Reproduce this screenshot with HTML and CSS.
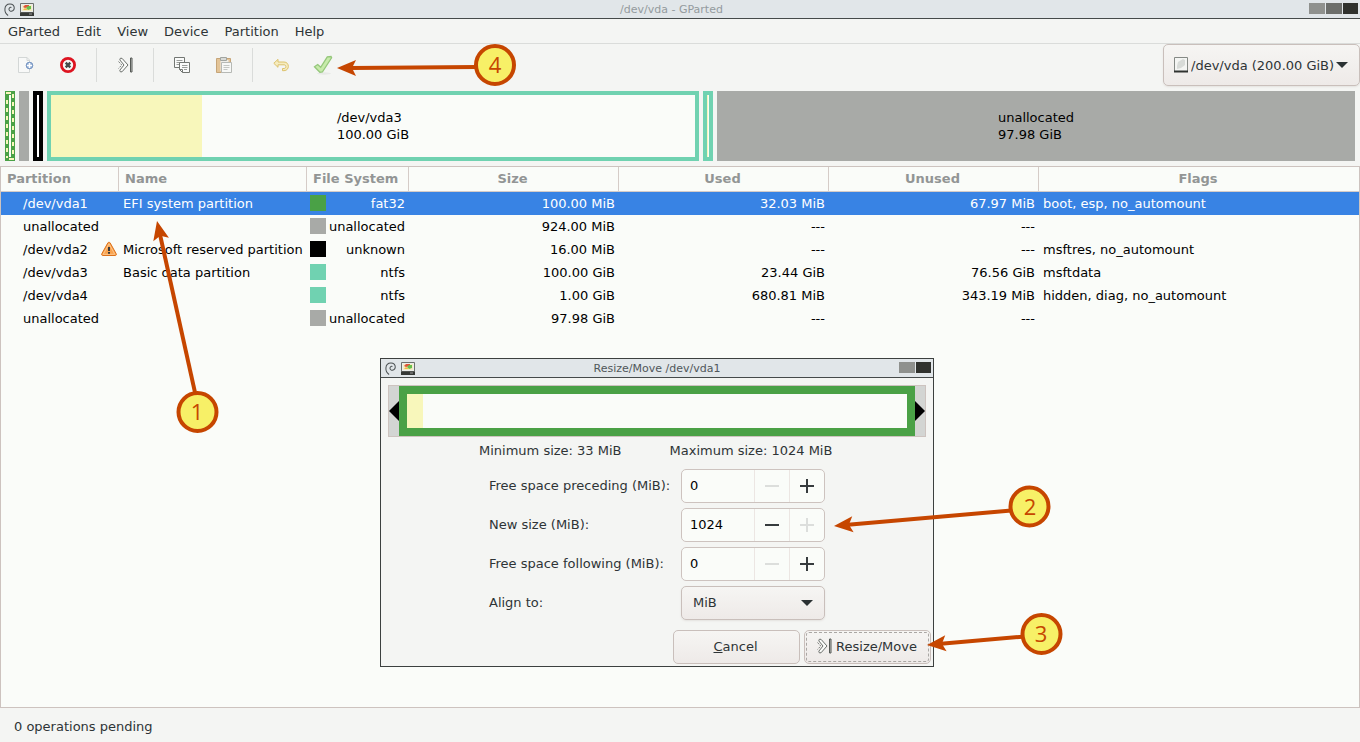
FILE: index.html
```html
<!DOCTYPE html>
<html lang="en">
<head>
<meta charset="utf-8">
<title>/dev/vda - GParted</title>
<link rel="stylesheet" href="styles.css">
</head>
<body>
<svg class="defs" aria-hidden="true">
  <symbol id="swirl" viewBox="0 0 12 14">
    <path d="M4.500 13.500C2 12 .8 9.500 1 6.500C1.200 3 3.500 1 6.500 1C9.500 1 11.300 3 11.200 5.500C11 8 9 9.200 7.200 8.800C5.400 8.400 5 6.500 5.900 5.300C6.500 4.500 7.400 4.300 8.200 4.700" fill="none" stroke="#4a5052" stroke-width="1.100"/>
  </symbol>
  <symbol id="app" viewBox="0 0 14 13">
    <path d="M.5.5h13v9H.5z" fill="#eceeeb" stroke="#6d716d"/>
    <path d="M0 9.500h14V13H0z" fill="#363936"/>
    <path d="M2 2h10v6H2z" fill="#f5ecc4"/>
    <path d="M3 4l2-2h4v2L5 5z" fill="#e0563b"/>
    <path d="M8 3h3v3L8 7 6 5z" fill="#68c04c"/>
    <path d="M3 7l2-2 3 2z" fill="#f2b845"/>
    <path d="M9 11h3" stroke="#999"/>
  </symbol>
  <symbol id="resize" viewBox="0 0 16 16">
    <path d="M3.300 1.300h1.700L11 8l-6 6.800H3.300l-.5-1.600L7 8 2.800 2.900z" fill="#fafbf9" stroke="#6b6f6b"/>
    <path d="M1.500 4.500L4.800 8l-3.300 3.500" fill="none" stroke="#7c807c" stroke-dasharray="2 1"/>
    <path d="M13.500 1h1.500v14h-1.500z" fill="#c9ccc9" stroke="#555955"/>
  </symbol>
  <symbol id="caret" viewBox="0 0 12 6"><path d="M0 0h12L6 6z" fill="#2b3133"/></symbol>
</svg>

<header class="titlebar">
  <div class="titlebar-icons"><svg class="swirl"><use href="#swirl"/></svg><svg class="app"><use href="#app"/></svg></div>
  <h1 class="title inactive">/dev/vda - GParted</h1>
  <div class="controls"><button class="ctl light" aria-label="Minimize"></button><button class="ctl mid" aria-label="Maximize"></button><button class="ctl dark" aria-label="Close"></button></div>
</header>

<nav class="menubar">
  <button>GParted</button><button>Edit</button><button>View</button><button>Device</button><button>Partition</button><button>Help</button>
</nav>

<div class="toolbar">
  <button class="tool" aria-label="New partition"><svg width="16" height="16" viewBox="0 0 16 16"><path d="M.5.5h8.500l2.500 2.500v12.500H.5z" fill="#f8f9f8" stroke="#d3d7d6"/><path d="M9 .5v3h3" fill="none" stroke="#d3d7d6"/><circle cx="11.500" cy="8.500" r="3.300" fill="#8fadd5" stroke="#7896c2"/><path d="M11.500 6v5M9 8.500h5" stroke="#fff" stroke-width="1.600"/></svg></button>
  <button class="tool" aria-label="Delete partition"><svg width="16" height="16" viewBox="0 0 16 16"><circle cx="8" cy="8" r="6.600" fill="#f7f7f5" stroke="#dd1420" stroke-width="2.800"/><path d="M5.700 5.700l4.600 4.600M10.300 5.700l-4.600 4.600" stroke="#444b4a" stroke-width="2.400"/></svg></button>
  <span class="sep"></span>
  <button class="tool" aria-label="Resize/Move"><svg width="16" height="16"><use href="#resize"/></svg></button>
  <span class="sep"></span>
  <button class="tool" aria-label="Copy"><svg width="16" height="16" viewBox="0 0 16 16"><path d="M.5.5h10v10H.5z" fill="#fafbfa" stroke="#737773"/><path d="M2.500 3.500h6M2.500 5.500h5M2.500 7.500h3" stroke="#9a9d9a"/><path d="M5.500 5.500h10v10h-7l-3-3z" fill="#fafbfa" stroke="#737773"/><path d="M8 8.500h5.500M8 10.500h5.500M10 12.500h3" stroke="#9a9d9a"/><path d="M5.500 12.500h3v3" fill="none" stroke="#737773"/></svg></button>
  <button class="tool" aria-label="Paste"><svg width="16" height="16" viewBox="0 0 16 16"><path d="M.5 1.500h14v14H.5z" fill="#e3c497" stroke="#c6a578"/><path d="M4.500 3h8v11h-8z" fill="#eeeeea"/><path d="M4.500.5h6v3h-6z" fill="#d8dad7" stroke="#a1a5a0"/><path d="M5.500 5.500h10v10h-10z" fill="#f7f8f6" stroke="#b6b9b5"/><path d="M7.500 8.500h6M7.500 10.500h6M7.500 12.500h4" stroke="#c4c7c3"/></svg></button>
  <span class="sep"></span>
  <button class="tool" aria-label="Undo"><svg width="16" height="16" viewBox="0 0 16 16"><path d="M5 2.300L.8 6.300 5 10.300V7.800h6c2.500 0 2.500 3.700 0 3.700H9.500v2.200H11c5.800 0 5.800-8.700 0-8.700H5z" fill="#f6ecbf" stroke="#dcc26c"/></svg></button>
  <button class="tool" aria-label="Apply"><svg width="20" height="20" viewBox="0 0 20 20"><ellipse cx="11" cy="18.500" rx="7" ry="1.200" fill="#e7e9e6"/><path d="M1.500 11.800l3.200-2.300 3 2.800L14.300 1.800l3.700-.3 .6 1.300-9.200 14.200-2.500.3z" fill="#c7ebaa" stroke="#95c77b" stroke-width="1.300"/></svg></button>
  <div class="device">
    <svg class="disk" width="14" height="16" viewBox="0 0 14 16"><path d="M.5.5h13v14H.5z" fill="#f4f5f3" stroke="#858985"/><path d="M3 9l1-4 5-3 2 1v5l-4 3-4 1z" fill="#d8dbd8"/><path d="M0 14.500h14" stroke="#303330" stroke-width="2"/></svg>
    <select class="select device-select" aria-label="Device"><option>/dev/vda (200.00 GiB)</option></select>
    <svg class="caret"><use href="#caret"/></svg>
  </div>
</div>

<section class="diskmap" aria-label="Disk layout">
  <div class="part efi"><svg class="fill" viewBox="0 0 10 70" preserveAspectRatio="none"><path d="M0 0h10v70H0z" fill="#4aa146"/><path d="M4 4h2v62H4z" fill="#fafcf9"/><path d="M1 2h5M4 68h5" stroke="#f8f7bb" stroke-width="2"/><path d="M2 9v58" stroke="#f8f7bb" stroke-width="2" stroke-dasharray="4 4"/><path d="M8 3v61" stroke="#f8f7bb" stroke-width="2" stroke-dasharray="4 4"/></svg></div>
  <div class="part grey"></div>
  <div class="part black"></div>
  <div class="part ntfs"><div class="used"></div><div class="caption">/dev/vda3<br>100.00 GiB</div></div>
  <div class="part ntfs"><div class="used-all"></div></div>
  <div class="part grey"><div class="caption">unallocated<br>97.98 GiB</div></div>
</section>

<main class="listing">
  <table>
    <colgroup><col class="c-part"><col class="c-name"><col class="c-fs"><col class="c-num"><col class="c-num"><col class="c-num"><col></colgroup>
    <thead><tr><th>Partition</th><th>Name</th><th>File System</th><th class="mid-text">Size</th><th class="mid-text">Used</th><th class="mid-text">Unused</th><th class="mid-text">Flags</th></tr></thead>
    <tbody>
      <tr class="selected"><td>/dev/vda1</td><td>EFI system partition</td><td><div class="fs"><i class="swatch green"></i>fat32</div></td><td>100.00 MiB</td><td>32.03 MiB</td><td>67.97 MiB</td><td>boot, esp, no_automount</td></tr>
      <tr><td>unallocated</td><td></td><td><div class="fs"><i class="swatch grey"></i>unallocated</div></td><td>924.00 MiB</td><td>---</td><td>---</td><td></td></tr>
      <tr><td><div class="warned">/dev/vda2<svg width="16" height="16" viewBox="0 0 16 16"><path d="M8 1.200c.5 0 .9.300 1.200.8l6 10.800c.5 1 0 1.700-1 1.700H1.800c-1 0-1.500-.7-1-1.700L6.800 2c.3-.5.7-.8 1.200-.8z" fill="#f9a24d" stroke="#dc711b"/><path d="M8 2.800l5.800 10.500H2.200z" fill="none" stroke="#fcc78e"/><path d="M8 6v4M8 11v1.800" stroke="#36393c" stroke-width="2"/></svg></div></td><td>Microsoft reserved partition</td><td><div class="fs"><i class="swatch black"></i>unknown</div></td><td>16.00 MiB</td><td>---</td><td>---</td><td>msftres, no_automount</td></tr>
      <tr><td>/dev/vda3</td><td>Basic data partition</td><td><div class="fs"><i class="swatch teal"></i>ntfs</div></td><td>100.00 GiB</td><td>23.44 GiB</td><td>76.56 GiB</td><td>msftdata</td></tr>
      <tr><td>/dev/vda4</td><td></td><td><div class="fs"><i class="swatch teal"></i>ntfs</div></td><td>1.00 GiB</td><td>680.81 MiB</td><td>343.19 MiB</td><td>hidden, diag, no_automount</td></tr>
      <tr><td>unallocated</td><td></td><td><div class="fs"><i class="swatch grey"></i>unallocated</div></td><td>97.98 GiB</td><td>---</td><td>---</td><td></td></tr>
    </tbody>
  </table>
</main>

<footer class="status">0 operations pending</footer>

<section class="dialog" role="dialog" aria-labelledby="dlg-title">
  <header class="titlebar">
    <div class="titlebar-icons"><svg class="swirl"><use href="#swirl"/></svg><svg class="app"><use href="#app"/></svg></div>
    <h2 class="title" id="dlg-title">Resize/Move /dev/vda1</h2>
    <div class="controls"><button class="ctl light" aria-label="Maximize"></button><button class="ctl dark" aria-label="Close"></button></div>
  </header>
  <form class="dialog-body">
    <div class="resizer">
      <svg width="10" height="20" viewBox="0 0 10 20"><path d="M10 0v20L0 10z"/></svg>
      <div class="resizer-part"><div class="resizer-used"></div></div>
      <svg width="10" height="20" viewBox="0 0 10 20"><path d="M0 0v20l10-10z"/></svg>
    </div>
    <div class="limits"><span>Minimum size: 33 MiB</span><span>Maximum size: 1024 MiB</span></div>
    <div class="fields">
      <label for="pre">Free space preceding (MiB):</label>
      <div class="spin"><input id="pre" type="text" value="0"><button type="button" disabled aria-label="Decrease"><svg class="sign" viewBox="0 0 14 14"><path d="M0 7h14"/></svg></button><button type="button" aria-label="Increase"><svg class="sign" viewBox="0 0 14 14"><path d="M0 7h14M7 0v14"/></svg></button></div>
      <label for="size">New size (MiB):</label>
      <div class="spin"><input id="size" type="text" value="1024"><button type="button" aria-label="Decrease"><svg class="sign" viewBox="0 0 14 14"><path d="M0 7h14"/></svg></button><button type="button" disabled aria-label="Increase"><svg class="sign" viewBox="0 0 14 14"><path d="M0 7h14M7 0v14"/></svg></button></div>
      <label for="post">Free space following (MiB):</label>
      <div class="spin"><input id="post" type="text" value="0"><button type="button" disabled aria-label="Decrease"><svg class="sign" viewBox="0 0 14 14"><path d="M0 7h14"/></svg></button><button type="button" aria-label="Increase"><svg class="sign" viewBox="0 0 14 14"><path d="M0 7h14M7 0v14"/></svg></button></div>
      <label for="align">Align to:</label>
      <div class="align"><select class="select" id="align"><option>MiB</option></select><svg class="caret"><use href="#caret"/></svg></div>
    </div>
    <div class="actions">
      <button type="button" class="btn"><span><u>C</u>ancel</span></button>
      <button type="button" class="btn focused"><svg width="16" height="16"><use href="#resize"/></svg>Resize/Move</button>
    </div>
  </form>
</section>

<svg class="notes" width="1360" height="742" viewBox="0 0 1360 742">
  <defs><path id="head" d="M0 0L19-8 15 0l4 8z"/></defs>
  <g transform="translate(157 221) rotate(77.500)"><path class="shaft" d="M14 0h162"/><use href="#head"/></g>
  <g transform="translate(834 526) rotate(-5)"><path class="shaft" d="M14 0h164"/><use href="#head"/></g>
  <g transform="translate(927 645) rotate(-5)"><path class="shaft" d="M14 0h82"/><use href="#head"/></g>
  <g transform="translate(337 68)"><path class="shaft" d="M14 0l126-1"/><use href="#head"/></g>
  <circle cx="197.500" cy="412" r="19"/><text x="197" y="420">1</text>
  <circle cx="1029.500" cy="506.500" r="19"/><text x="1030" y="515">2</text>
  <circle cx="1041.500" cy="634" r="19"/><text x="1041" y="642">3</text>
  <circle cx="495" cy="65" r="19"/><text x="495" y="73">4</text>
</svg>
</body>
</html>
```
FILE: styles.css
```css
* { box-sizing: border-box; }
body {
  margin: 0;
  min-height: 100vh;
  display: flex;
  flex-direction: column;
  position: relative;
  overflow: hidden;
  background: #f4f5f3;
  color: #2e3436;
  font: 13px/17px "DejaVu Sans", sans-serif;
}
button, input, select { font: inherit; color: inherit; margin: 0; }
button { background: none; border: 0; padding: 0; }
svg { display: block; flex: none; }
.defs { position: absolute; width: 0; height: 0; }

.titlebar {
  display: flex;
  align-items: center;
  height: 19px;
  padding: 0 2px 0 4px;
  background: #e1e6e9;
  border-bottom: 1px solid #454a4a;
}
.titlebar-icons { display: flex; align-items: center; gap: 5px; }
.swirl { width: 11px; height: 13px; }
.app { width: 14px; height: 13px; }
.title { flex: 1; margin: 0; padding-top: 2px; text-align: center; font-size: 11px; line-height: 16px; font-weight: normal; color: #50575a; }
.title.inactive { color: #949b9e; }
.controls { display: flex; gap: 1px; justify-content: flex-end; padding-bottom: 1px; }
.ctl { width: 16px; height: 11px; }
.ctl.light { background: #8f918e; }
.ctl.mid { background: #6c6e6b; }
.ctl.dark { background: #30322e; width: 15px; }

.menubar {
  display: flex;
  gap: 16px;
  align-items: center;
  height: 25px;
  padding: 0 8px;
  border-bottom: 1px solid #dadcda;
}

.toolbar { display: flex; align-items: center; height: 42px; padding-left: 5px; }
.tool { width: 42px; height: 42px; display: flex; align-items: center; justify-content: center; }
.sep { width: 1px; height: 34px; margin: 0 7px; background: #dadcda; }
.device { position: relative; margin-left: auto; }
.select {
  display: block;
  appearance: none;
  width: 100%;
  height: 34px;
  padding: 0 11px 2px;
  border: 1px solid #c9bfbb;
  border-radius: 5px;
  background: linear-gradient(#f6f5f3, #eeeae8);
  box-shadow: 0 1px 2px #e4e2df;
}
.device-select { height: 42px; width: 197px; padding: 0 24px 0 27px; }
.caret { position: absolute; right: 12px; top: 14px; width: 12px; height: 6px; pointer-events: none; }
.device .caret { top: 18px; }
.disk { position: absolute; left: 11px; top: 13px; }

.diskmap {
  display: grid;
  grid-template-columns: 10px 10px 10px 652fr 10px 638fr;
  gap: 4px;
  padding: 5px;
  height: 80px;
}
.part { display: flex; position: relative; }
.grey { background: #a8aaa7; }
.ntfs { background: #fafcf9; border: 4px solid #70d2b1; }
.part.black { background: #fff; border: 4px solid #000; }
.fill { width: 10px; height: 70px; }
.used { width: 23.440%; background: #f8f7bb; }
.used-all { width: 1px; background: #f8f7bb; }
.caption { position: absolute; inset: 0; display: flex; align-items: center; justify-content: center; color: #000; }

.listing { flex: 1; background: #fafcf9; border: 1px solid #cdc3bf; overflow: hidden; }
table { width: 100%; table-layout: fixed; border-collapse: separate; border-spacing: 0; color: #000; }
.c-part { width: 118px; }
.c-name { width: 188px; }
.c-fs { width: 102px; }
.c-num { width: 210px; }
th {
  height: 25px;
  padding: 0 6px 2px;
  text-align: left;
  color: #929595;
  border-right: 1px solid #d5ccc8;
  border-bottom: 1px solid #d5ccc8;
}
th:last-child { border-right: 0; }
th.mid-text { text-align: center; padding: 0 2px 2px 0; }
td { height: 23px; padding: 0 4px; white-space: nowrap; text-align: right; }
td:first-child { padding-left: 22px; padding-right: 2px; text-align: left; }
td:nth-child(2), td:last-child { text-align: left; }
td:nth-child(3) { padding-left: 3px; }
.selected { background: #3883e4; color: #fff; }
.fs { display: flex; justify-content: space-between; align-items: flex-start; }
.warned { display: flex; justify-content: space-between; align-items: flex-start; }
.swatch { width: 16px; height: 16px; }
.swatch.green { background: #4aa146; }
.swatch.teal { background: #70d2b1; }
.swatch.black { background: #000; }

.status { height: 34px; padding: 10px 14px 0; }

.dialog {
  position: absolute;
  left: 380px;
  top: 358px;
  width: 554px;
  background: #f4f5f3;
  border: 1px solid #3c403f;
}
.dialog-body { display: flex; flex-direction: column; padding: 7px 2px 2px 7px; }
.resizer {
  display: flex;
  align-items: center;
  height: 52px;
  margin-right: 5px;
  background: #d3d5d3;
  border: 1px solid #cdc3bf;
}
.resizer-part { flex: 1; display: flex; height: 50px; border: 8px solid #4aa146; background: #fafcf9; }
.resizer-used { width: 16px; background: #f8f7bb; }
.limits { display: flex; gap: 48px; padding: 5px 0 10px 91px; }
.fields {
  display: grid;
  grid-template-columns: 192px 144px;
  row-gap: 5px;
  align-items: center;
  padding-left: 101px;
}
.fields label { padding-bottom: 2px; }
.spin { display: flex; height: 34px; border: 1px solid #cdc3bf; border-radius: 5px; background: #fafcf9; overflow: hidden; }
.spin input { flex: 1; width: 0; padding: 0 8px 2px; border: 0; background: none; color: #000; }
.spin button { width: 35px; border-left: 1px solid #ece6e3; display: flex; align-items: center; justify-content: center; color: #363b3e; }
.spin button:disabled { color: #dcdedc; }
.sign { width: 14px; height: 14px; stroke: currentColor; stroke-width: 2; }
.align { position: relative; }
.actions { display: flex; justify-content: flex-end; gap: 4px; padding-top: 10px; }
.btn {
  display: flex;
  align-items: center;
  justify-content: center;
  gap: 4px;
  width: 127px;
  height: 34px;
  padding: 0 2px 2px 0;
  border: 1px solid #c9bfbb;
  border-radius: 5px;
  background: linear-gradient(#f6f5f3, #eeeae8);
}
.focused { outline: 1px dashed #aaa7a4; outline-offset: -3px; }

.notes { position: absolute; left: 0; top: 0; pointer-events: none; fill: #c64600; }
.shaft { stroke: #c64600; stroke-width: 4; }
.notes circle { fill: #f7f067; stroke: #c64600; stroke-width: 4; }
.notes text { font: 22px "Open Sans", sans-serif; text-anchor: middle; }
```
